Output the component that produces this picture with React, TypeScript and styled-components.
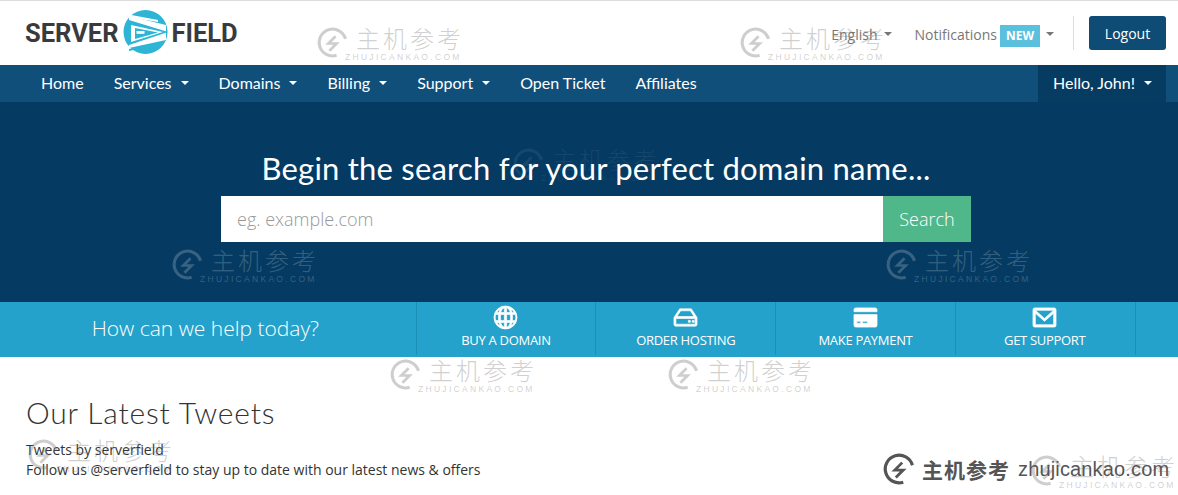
import React from "react";
import styled, { createGlobalStyle } from "styled-components";

const GlobalStyle = createGlobalStyle`
  html, body {
    margin: 0;
    padding: 0;
    background: #fff;
    font-family: "Open Sans", "Liberation Sans", sans-serif;
    color: #333;
  }
  * { box-sizing: border-box; }
`;

const headingFont = `"Lato", "Open Sans", sans-serif`;

const Page = styled.div`
  position: relative;
  width: 1178px;
  height: 495px;
  overflow: hidden;
  border-top: 1px solid #ddd;
`;

const Header = styled.header`
  height: 64px;
  display: flex;
  align-items: center;
  padding: 0 12px 0 25px;
`;

const Logo = styled.div`
  display: flex;
  align-items: center;
  font-family: "Roboto", "Liberation Sans", sans-serif;
  font-weight: 700;
  font-size: 25.5px;
  color: #3a3a3c;
`;

const LogoMark = styled.svg`
  width: 47px;
  height: 47px;
  margin: -2px 2px 0 4px;
  flex: none;
`;

const HeaderRight = styled.div`
  margin-left: auto;
  display: flex;
  align-items: center;
`;

const TopLink = styled.span`
  display: inline-flex;
  align-items: center;
  padding-top: 2px;
  font-size: 14px;
  color: #777;
  margin-right: 23px;
`;

const Caret = styled.i<{ $light?: boolean }>`
  display: inline-block;
  width: 0;
  height: 0;
  margin-left: 6px;
  border-left: 4px solid transparent;
  border-right: 4px solid transparent;
  border-top: 4px solid ${(p) => (p.$light ? "#fff" : "#777")};
`;

const NewBadge = styled.span`
  background: #5bc0de;
  color: #fff;
  font-size: 12px;
  font-weight: 700;
  padding: 0 6px;
  line-height: 22px;
  height: 22px;
  margin: 3px 0 0 3px;
`;

const Divider = styled.div`
  width: 1px;
  height: 34px;
  background: #ddd;
  margin-right: 15px;
  margin-left: -4px;
`;

const LogoutButton = styled.button`
  width: 77px;
  height: 34px;
  background: #0f4c75;
  color: #fff;
  border: 0;
  border-radius: 3px;
  font-family: inherit;
  font-size: 14px;
  padding: 0;
`;

const Nav = styled.nav`
  height: 37px;
  background: #114f7b;
  display: flex;
  align-items: stretch;
  padding: 0 12px 0 26px;
  font-family: ${headingFont};
  font-size: 16px;
  color: #fff;
`;

const NavItem = styled.span`
  display: flex;
  align-items: center;
  padding: 0 15px 2px;
  ${Caret} { margin-left: 9px; }
`;

const NavUser = styled(NavItem)`
  margin-left: auto;
  width: 128px;
  background: #063c61;
  white-space: nowrap;
`;

const Hero = styled.section`
  height: 200px;
  background: #053b62;
  display: flex;
  flex-direction: column;
  align-items: center;
  padding: 47px 0 0 14px;
`;

const HeroTitle = styled.h1`
  margin: 0 0 8px;
  font-family: ${headingFont};
  font-weight: 400;
  font-size: 31px;
  line-height: 39px;
  letter-spacing: 0.21px;
  color: #fff;
`;

const SearchRow = styled.div`
  display: flex;
  width: 750px;
  height: 46px;
`;

const SearchInput = styled.input`
  flex: 1;
  min-width: 0;
  border: 0;
  outline: 0;
  padding: 0 16px;
  font-family: "Open Sans", sans-serif;
  font-size: 18px;
  font-weight: 300;
  background: #fff;
  &::placeholder { color: #999; opacity: 1; }
`;

const SearchButton = styled.button`
  width: 88px;
  border: 0;
  background: #4fb78a;
  color: #fff;
  font-family: "Open Sans", sans-serif;
  font-size: 18px;
  font-weight: 300;
  padding: 0;
`;

const HelpBar = styled.section`
  height: 55px;
  background: #25a2cb;
  display: flex;
`;

const HelpTitle = styled.div`
  width: 415.6px;
  padding: 0 5px 3px 0;
  display: flex;
  align-items: center;
  justify-content: center;
  color: #fff;
  font-family: "Open Sans", sans-serif;
  font-weight: 300;
  font-size: 21px;
`;

const HelpLink = styled.a`
  width: 179.75px;
  display: flex;
  flex-direction: column;
  align-items: center;
  height: 53px;
  border-left: 1px solid #1c8fb6;
  color: #fff;
  font-size: 13px;
  line-height: 16px;
  text-transform: uppercase;
  letter-spacing: -0.3px;
  &:last-child {
    width: 180.75px;
    border-right: 1px solid #1c8fb6;
    padding-right: 1px;
  }
`;

const HelpIcon = styled.svg`
  width: 25px;
  height: 25px;
  margin-top: 3px;
  margin-bottom: 2px;
  fill: #fff;
  stroke: #fff;
  stroke-width: 0.7;
`;

const Content = styled.main`
  padding: 37px 26px 0;
`;

const SectionTitle = styled.h2`
  margin: 0 0 10px;
  font-family: ${headingFont};
  font-weight: 300;
  font-size: 30px;
  line-height: 36px;
  letter-spacing: 0.82px;
  color: #333;
`;

const TweetLine = styled.div`
  font-size: 14px;
  line-height: 20px;
  color: #333;
`;

const markColors = {
  light: "rgba(120,120,120,.36)",
  dark: "rgba(255,255,255,.2)",
  faint: "rgba(255,255,255,.07)",
};

const Mark = styled.div<{ $x: number; $y: number; $tone: keyof typeof markColors }>`
  position: absolute;
  left: ${(p) => p.$x}px;
  top: ${(p) => p.$y}px;
  width: 148px;
  pointer-events: none;
  display: grid;
  grid-template-columns: 40px 1fr;
  color: ${(p) => markColors[p.$tone]};
`;

const MarkCjk = styled.span`
  font-family: "Noto Sans CJK SC", sans-serif;
  font-size: 24px;
  line-height: 24px;
  letter-spacing: 3px;
  font-weight: 300;
  white-space: nowrap;
`;

const MarkSub = styled.span`
  grid-column: 1 / 3;
  grid-row: 2;
  font-family: "Liberation Sans", sans-serif;
  font-size: 8.5px;
  line-height: 9px;
  letter-spacing: 2.3px;
  padding-left: 29px;
  margin-top: 3px;
  white-space: nowrap;
`;

const MarkGlyph = styled.svg`
  width: 33px;
  height: 33px;
  grid-row: 1 / 3;
  grid-column: 1;
  fill: none;
  stroke: currentColor;
  stroke-width: 3;
`;

const Stamp = styled.div`
  position: absolute;
  left: 882px;
  top: 451px;
  display: flex;
  align-items: center;
  color: #555;
`;

const StampGlyph = styled.svg`
  width: 34px;
  height: 34px;
  fill: none;
  stroke: currentColor;
  stroke-width: 3;
`;

const StampCjk = styled.span`
  font-family: "Noto Sans CJK SC", sans-serif;
  font-size: 21px;
  font-weight: 700;
  letter-spacing: 1px;
  margin: 0 8px 0 6px;
`;

const StampUrl = styled.span`
  font-family: "Liberation Sans", sans-serif;
  font-size: 20px;
  letter-spacing: 0.15px;
`;

const Bolt = () => (
  <>
    <path d="M28.600 12.500A13 13 0 1 0 20 28.400" />
    <path d="M19 10L12 17H20L13 24" strokeWidth="2.6" />
  </>
);

const Watermark = ({ x, y, tone = "light" }: { x: number; y: number; tone?: keyof typeof markColors }) => (
  <Mark $x={x} $y={y} $tone={tone}>
    <MarkGlyph viewBox="0 0 32 32"><Bolt /></MarkGlyph>
    <MarkCjk>主机参考</MarkCjk>
    <MarkSub>ZHUJICANKAO.COM</MarkSub>
  </Mark>
);

const helpLinks = [
  {
    label: "Buy a domain",
    icon: "M13 1a12 12 0 1 0 0 24 12 12 0 0 0 0-24zm-1.200 1.800v5H8c.6-2.400 2-4.300 3.800-5zm2.400 0c1.800.7 3.200 2.600 3.800 5h-3.800v-5zM6.200 7.800H3.800a10.500 10.500 0 0 1 3.700-3.600c-.6 1-1 2.200-1.300 3.600zm14 0h-.4c-.3-1.400-.7-2.600-1.300-3.600a10.500 10.500 0 0 1 3.700 3.600h-2zM2.800 9.800h3.100a19 19 0 0 0 0 6.400H2.800a10.500 10.500 0 0 1 0-6.400zm5.300 0h3.700v6.400H8.100a16 16 0 0 1 0-6.400zm6.100 0h3.700a16 16 0 0 1 0 6.400h-3.700V9.800zm5.900 0h3.100a10.500 10.500 0 0 1 0 6.400h-3.100a19 19 0 0 0 0-6.400zM3.800 18.200h2.400c.3 1.400.7 2.600 1.300 3.600a10.500 10.500 0 0 1-3.700-3.600zm4.200 0h3.800v5c-1.800-.7-3.200-2.600-3.800-5zm6.200 0H18c-.6 2.400-2 4.300-3.800 5v-5zm5.600 0h2.400a10.500 10.500 0 0 1-3.700 3.600c.6-1 1-2.200 1.300-3.600z",
  },
  {
    label: "Order hosting",
    icon: "M7 4h12l6 9v7a2 2 0 0 1-2 2H3a2 2 0 0 1-2-2v-7L7 4zm1 2l-4 6h18l-4-6H8zM3 14v6h20v-6H3zm13 2h2v2h-2v-2zm4 0h2v2h-2v-2z",
  },
  {
    label: "Make payment",
    icon: "M3 3h20a2 2 0 0 1 2 2v2H1V5a2 2 0 0 1 2-2zM1 10h24v11a2 2 0 0 1-2 2H3a2 2 0 0 1-2-2V10zm3 7v2h4v-2H4zm6 0v2h5v-2h-5z",
  },
  {
    label: "Get support",
    icon: "M3 3h20a2 2 0 0 1 2 2v16a2 2 0 0 1-2 2H3a2 2 0 0 1-2-2V5a2 2 0 0 1 2-2zm.500 2.500L13 14l9.500-8.500h-19zM3.500 8.500v12h19v-12L13 17 3.500 8.500z",
  },
];

const navItems: [string, boolean][] = [
  ["Home", false],
  ["Services", true],
  ["Domains", true],
  ["Billing", true],
  ["Support", true],
  ["Open Ticket", false],
  ["Affiliates", false],
];

export default function App() {
  return (
    <Page>
      <GlobalStyle />
      <Header>
        <Logo>
          SERVER
          <LogoMark viewBox="4 2 47 47">
            <circle cx="27.500" cy="25" r="22" fill="#2eb5d5" />
            <path d="M11 9L48 18V33L11 41Z" fill="#fff" />
            <path d="M3 6L40 13L40 15L3 9Z" fill="#fff" />
            <path d="M11 13L50 25L11 38Z" fill="#2eb5d5" />
            <path d="M13 18L45 25L13 35Z" fill="#fff" />
            <path d="M17 21L40 25.500L17 32Z" fill="#2eb5d5" />
            <rect x="18.500" y="24" width="8" height="2.800" fill="#fff" />
            <path d="M11 42L27 38.500V40.500L11 44Z" fill="#2eb5d5" />
          </LogoMark>
          FIELD
        </Logo>
        <HeaderRight>
          <TopLink>English<Caret /></TopLink>
          <TopLink>
            Notifications
            <NewBadge>NEW</NewBadge>
            <Caret />
          </TopLink>
          <Divider />
          <LogoutButton>Logout</LogoutButton>
        </HeaderRight>
      </Header>

      <Nav>
        {navItems.map(([label, caret]) => (
          <NavItem key={label}>
            {label}
            {caret && <Caret $light />}
          </NavItem>
        ))}
        <NavUser>Hello, John!<Caret $light /></NavUser>
      </Nav>

      <Hero>
        <HeroTitle>Begin the search for your perfect domain name...</HeroTitle>
        <SearchRow>
          <SearchInput placeholder="eg. example.com" />
          <SearchButton>Search</SearchButton>
        </SearchRow>
      </Hero>

      <HelpBar>
        <HelpTitle>How can we help today?</HelpTitle>
        {helpLinks.map((l) => (
          <HelpLink key={l.label}>
            <HelpIcon viewBox="0 0 26 26"><path fillRule="evenodd" d={l.icon} /></HelpIcon>
            {l.label}
          </HelpLink>
        ))}
      </HelpBar>

      <Content>
        <SectionTitle>Our Latest Tweets</SectionTitle>
        <TweetLine>Tweets by serverfield</TweetLine>
        <TweetLine>Follow us @serverfield to stay up to date with our latest news &amp; offers</TweetLine>
      </Content>

      <Watermark x={316} y={25} />
      <Watermark x={739} y={25} />
      <Watermark x={512} y={146} tone="faint" />
      <Watermark x={171} y={247} tone="dark" />
      <Watermark x={885} y={247} tone="dark" />
      <Watermark x={389} y={357} />
      <Watermark x={667} y={357} />
      <Watermark x={27} y={437} />
      <Watermark x={1030} y={453} />
      <Stamp>
        <StampGlyph viewBox="0 0 32 32"><Bolt /></StampGlyph>
        <StampCjk>主机参考</StampCjk>
        <StampUrl>zhujicankao.com</StampUrl>
      </Stamp>
    </Page>
  );
}
